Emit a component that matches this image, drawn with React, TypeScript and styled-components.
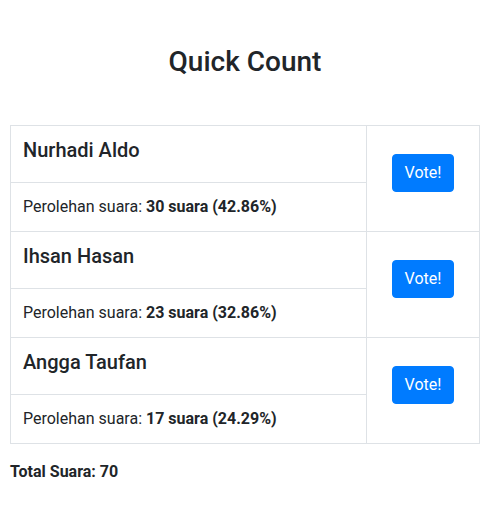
import React from "react";
import styled, { createGlobalStyle } from "styled-components";

const Global = createGlobalStyle`
  html, body { margin: 0; padding: 0; background: #fff; }
  body {
    font-family: Roboto, "Noto Sans", "Liberation Sans", sans-serif;
    font-size: 16px;
    line-height: 1.5;
    color: #212529;
  }
  * { box-sizing: border-box; }
`;

const Page = styled.div`
  padding: 10px 11px 10px 10px;
`;

const Title = styled.h3`
  margin: 35px 0 46px;
  font-size: 28px;
  font-weight: 500;
  line-height: 1.2;
  text-align: center;
`;

const Table = styled.table`
  width: 100%;
  border-collapse: collapse;
  margin-bottom: 16px;
`;

const Cell = styled.td<{ $side?: boolean }>`
  border: 1px solid #dee2e6;
  padding: ${(p) => (p.$side ? "12px 12px 22px" : "12px")};
  vertical-align: ${(p) => (p.$side ? "middle" : "top")};
  text-align: ${(p) => (p.$side ? "center" : "left")};
  width: ${(p) => (p.$side ? "113px" : "auto")};
`;

const Name = styled.h5`
  margin: 0 0 8px;
  font-size: 20px;
  font-weight: 500;
  line-height: 1.2;
`;

const VoteButton = styled.button`
  font-family: inherit;
  font-size: 16px;
  line-height: 1.5;
  padding: 6px 12px;
  color: #fff;
  background: #007bff;
  border: 1px solid #007bff;
  border-radius: 4px;
  cursor: pointer;
`;

const Total = styled.div`
  font-weight: 700;
`;

const candidates = [
  { name: "Nurhadi Aldo", votes: 30, pct: "42.86" },
  { name: "Ihsan Hasan", votes: 23, pct: "32.86" },
  { name: "Angga Taufan", votes: 17, pct: "24.29" },
];

export default function App() {
  const total = candidates.reduce((s, c) => s + c.votes, 0);
  return (
    <Page>
      <Global />
      <Title>Quick Count</Title>
      <Table>
        <tbody>
          {candidates.map((c) => (
            <React.Fragment key={c.name}>
              <tr>
                <Cell>
                  <Name>{c.name}</Name>
                </Cell>
                <Cell $side rowSpan={2}>
                  <VoteButton>Vote!</VoteButton>
                </Cell>
              </tr>
              <tr>
                <Cell>
                  Perolehan suara:{" "}
                  <b>
                    {c.votes} suara ({c.pct}%)
                  </b>
                </Cell>
              </tr>
            </React.Fragment>
          ))}
        </tbody>
      </Table>
      <Total>Total Suara: {total}</Total>
    </Page>
  );
}
